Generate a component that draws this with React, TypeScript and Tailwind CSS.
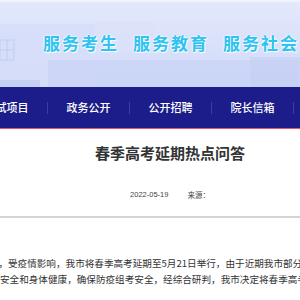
import React from 'react';

const navItems = ['考试项目', '政务公开', '公开招聘', '院长信箱', '信息查询'];

const slogans = ['服务考生', '服务教育', '服务社会'];

// faint campus picture behind the slogan
const BannerArt: React.FC = () => (
  <svg className="absolute inset-0" width="300" height="85" viewBox="0 0 300 85" preserveAspectRatio="none">
    <defs>
      <linearGradient id="sky" x1="0" y1="0" x2="0" y2="1">
        <stop offset="0" stopColor="#e3e8fc" />
        <stop offset="1" stopColor="#d0d9f8" />
      </linearGradient>
    </defs>
    <rect width="300" height="85" fill="url(#sky)" />
    <rect x="0" y="22" width="95" height="63" fill="#d6ddf9" opacity="0.8" />
    <rect x="0" y="38" width="14" height="20" fill="none" stroke="#c3cdf3" strokeWidth="1" />
    <line x1="0" y1="48" x2="14" y2="48" stroke="#c3cdf3" />
    <line x1="7" y1="38" x2="7" y2="58" stroke="#c3cdf3" />
    <rect x="48" y="58" width="250" height="27" fill="#c9d3f6" opacity="0.7" />
    <rect x="95" y="20" width="60" height="30" fill="#dbe1fa" opacity="0.7" />
    <rect x="0" y="78" width="40" height="7" fill="#c6d0f4" />
    <rect x="250" y="55" width="50" height="30" fill="#c4cef4" opacity="0.6" />
  </svg>
);

export default function App() {
  return (
    <div className="w-[300px] h-[300px] overflow-hidden bg-white font-['Noto_Sans_CJK_SC',sans-serif]">
      {/* banner */}
      <div className="h-[2px] bg-[#f1f3fc]" />
      <div className="relative h-[85px] overflow-hidden">
        <BannerArt />
        <div className="relative flex items-center h-full pl-[43px] pb-[4px] gap-[14px] whitespace-nowrap">
          {slogans.map((s) => (
            <span
              key={s}
              className="text-[17px] leading-none font-bold tracking-[2px] text-[#2ec3f0] [text-shadow:0_0_2px_#fff,0_0_2px_#fff,1px_1px_1px_#fff]"
            >
              {s}
            </span>
          ))}
        </div>
      </div>

      {/* nav */}
      <div className="h-[42px] bg-[#1c1c8a] border-b border-[#e0566a] flex items-center overflow-hidden">
        <div className="flex items-center ml-[-34px] shrink-0">
          {navItems.map((item) => (
            <div key={item} className="flex items-center w-[82px] shrink-0">
              <span className="flex-1 text-center text-[11px] leading-none font-medium text-white">{item}</span>
              <span className="w-px h-[12px] bg-[#3e3ea0]" />
            </div>
          ))}
        </div>
      </div>

      {/* article */}
      <div className="pl-[40px] pt-[14px] flex flex-col items-center">
        <h1 className="text-[15px] leading-[20px] font-bold text-[#333] whitespace-nowrap">春季高考延期热点问答</h1>
        <div className="mt-[27px] flex gap-[19px] text-[7.5px] leading-[10px] text-[#444] whitespace-nowrap">
          <span className="font-['Liberation_Sans',sans-serif]">2022-05-19</span>
          <span>来源：</span>
        </div>
      </div>
      <div className="mt-[16px] h-[2px] bg-[#d4d4d4]" />

      <div className="mt-[37px] text-[9.6px] leading-[16px] text-[#333] whitespace-nowrap">
        <p className="ml-[-1.6px]">，受疫情影响，我市将春季高考延期至5月21日举行，由于近期我市部分地区疫情</p>
        <p>安全和身体健康，确保防疫组考安全，经综合研判，我市决定将春季高考</p>
      </div>
    </div>
  );
}
